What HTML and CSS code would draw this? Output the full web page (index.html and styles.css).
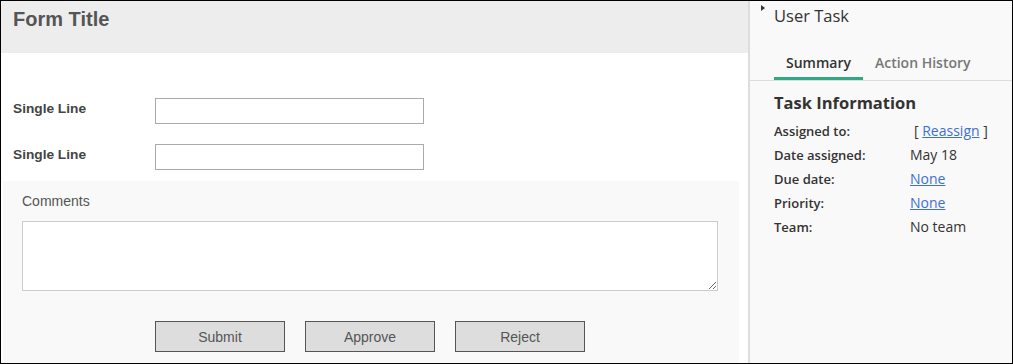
FILE: index.html
```html
<!DOCTYPE html>
<html>
<head>
<meta charset="utf-8">
<link rel="stylesheet" href="styles.css">
</head>
<body>
<div class="frame">
  <main class="form">
    <header class="form-head"><h1 class="form-title">Form Title</h1></header>
    <div class="fields">
      <div class="field"><label class="field-label">Single Line</label><input class="field-input" type="text"></div>
      <div class="field"><label class="field-label">Single Line</label><input class="field-input" type="text"></div>
    </div>
    <section class="comments">
      <div class="comments-label">Comments</div>
      <textarea class="comments-box"></textarea>
      <div class="actions">
        <button class="btn">Submit</button>
        <button class="btn">Approve</button>
        <button class="btn">Reject</button>
      </div>
    </section>
  </main>
  <div class="divider"></div>
  <aside class="panel">
    <div class="panel-head">
      <span class="caret"></span>
      <div class="panel-title">User Task</div>
    </div>
    <nav class="tabs">
      <div class="tab active">Summary</div>
      <div class="tab">Action History</div>
    </nav>
    <div class="info">
      <h2 class="info-title">Task Information</h2>
      <div class="info-grid">
        <div class="k">Assigned to:</div><div class="v reassign">[ <a href="#">Reassign</a> ]</div>
        <div class="k">Date assigned:</div><div class="v">May 18</div>
        <div class="k">Due date:</div><div class="v"><a href="#">None</a></div>
        <div class="k">Priority:</div><div class="v"><a href="#">None</a></div>
        <div class="k">Team:</div><div class="v">No team</div>
      </div>
    </div>
  </aside>
</div>
</body>
</html>
```
FILE: styles.css
```css
* { box-sizing: border-box; }
html, body { margin: 0; padding: 0; background: #fff; }
.frame {
  width: 1013px;
  height: 364px;
  border: 1px solid #000;
  display: flex;
  overflow: hidden;
}
.form {
  width: 747px;
  flex: none;
  font-family: "Liberation Sans", Arial, sans-serif;
  background: #fff;
  display: flex;
  flex-direction: column;
}
.form-head {
  height: 52px;
  background: #ededed;
  padding: 7px 12px 0;
}
.form-title {
  margin: 0;
  font-size: 20px;
  line-height: 23px;
  font-weight: bold;
  color: #555;
}
.fields {
  padding: 45px 0 0 12px;
  display: flex;
  flex-direction: column;
  gap: 20px;
}
.field {
  display: flex;
  align-items: center;
  height: 26px;
}
.field-label {
  width: 142px;
  font-size: 13.7px;
  font-weight: bold;
  color: #444;
  position: relative;
  top: -3px;
}
.field-input {
  width: 269px;
  height: 26px;
  border: 1px solid #aaa;
  margin: 0;
  padding: 0 4px;
  background: #fff;
}
.comments {
  margin: 11px 9px 0 2px;
  flex: 1;
  background: #f9f9f9;
  padding: 12px 19px 0;
}
.comments-label {
  font-size: 14px;
  line-height: 16px;
  color: #555;
}
.comments-box {
  display: block;
  margin-top: 12px;
  width: 696px;
  height: 70px;
  border: 1px solid #ccc;
  background: #fff;
  resize: both;
  padding: 2px;
}
.actions {
  display: flex;
  gap: 20px;
  margin: 30px 0 0 133px;
}
.btn {
  width: 130px;
  height: 31px;
  background: #ddd;
  border: 1px solid #555;
  font-family: "Liberation Sans", Arial, sans-serif;
  font-size: 14px;
  color: #555;
  padding: 0;
}
.divider {
  width: 2px;
  flex: none;
  background: #ddd;
}
.panel {
  flex: 1;
  background: #f9f9f9;
  font-family: "Open Sans", sans-serif;
  color: #333;
}
.panel-head {
  position: relative;
  padding: 3px 0 0 24px;
  height: 45px;
}
.caret {
  position: absolute;
  left: 11px;
  top: 4px;
  width: 0;
  height: 0;
  border-top: 3px solid transparent;
  border-bottom: 3px solid transparent;
  border-left: 4px solid #333;
}
.panel-title {
  font-size: 16.5px;
  line-height: 24px;
  color: #333;
}
.tabs {
  display: flex;
  padding-left: 24px;
  border-bottom: 1px solid #ddd;
  height: 35px;
}
.tab {
  padding: 6px 12px 0;
  font-size: 14px;
  line-height: 22px;
  font-weight: 600;
  color: #777;
  height: 34px;
}
.tab.active {
  color: #333;
  border-bottom: 3px solid #2fa884;
}
.info {
  padding: 10px 0 0 24px;
}
.info-title {
  margin: 0 0 4px;
  font-size: 16.5px;
  line-height: 24px;
  font-weight: 700;
  color: #333;
}
.info-grid {
  display: grid;
  grid-template-columns: 136px auto;
  font-size: 13px;
  line-height: 24px;
}
.k { font-weight: 600; color: #333; }
.v { color: #333; font-size: 14px; }
.v a { color: #3d6fd6; text-decoration: underline; }
.reassign { padding-left: 4px; }
```
